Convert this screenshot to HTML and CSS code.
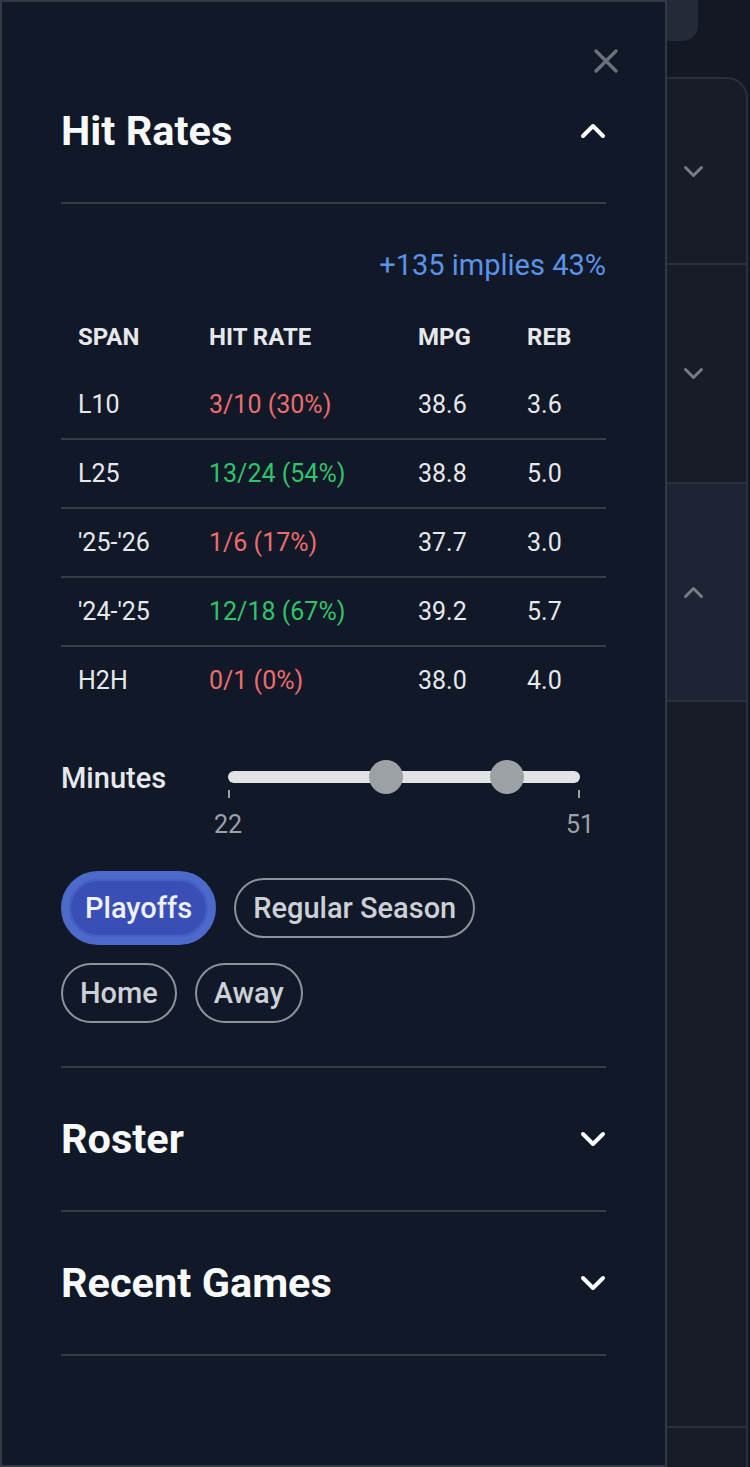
FILE: index.html
```html
<!DOCTYPE html>
<html lang="en">
<head>
<meta charset="utf-8">
<title>Hit Rates</title>
<link rel="stylesheet" href="styles.css">
</head>
<body>
<div class="backdrop">
  <div class="topbar"></div>
  <div class="card">
    <div class="brow r1"><svg class="bchev" width="21" height="13" viewBox="0 0 21 13"><path d="M2.5 2.5 L10.5 10.5 L18.5 2.5"/></svg></div>
    <div class="brow r2"><svg class="bchev" width="21" height="13" viewBox="0 0 21 13"><path d="M2.5 2.5 L10.5 10.5 L18.5 2.5"/></svg></div>
    <div class="brow r3"><svg class="bchev" width="21" height="13" viewBox="0 0 21 13"><path d="M2.5 10.5 L10.5 2.5 L18.5 10.5"/></svg></div>
    <div class="brow r4"></div>
    <div class="brow r5"></div>
  </div>
</div>

<aside class="drawer">
  <button class="close" aria-label="Close">
    <svg width="26" height="26" viewBox="0 0 26 26"><path d="M3 3 L23 23 M23 3 L3 23"/></svg>
  </button>

  <section class="sec">
    <div class="sec-head open">
      <h2>Hit Rates</h2>
      <svg class="chev" width="26" height="16" viewBox="0 0 26 16"><path d="M3 13 L13 3 L23 13"/></svg>
    </div>
    <div class="sec-body">
      <p class="implied">+135 implies 43%</p>
      <div class="rates">
        <div class="trow head"><span>SPAN</span><span>HIT RATE</span><span>MPG</span><span>REB</span></div>
        <div class="trow"><span>L10</span><span class="miss">3/10 (30%)</span><span>38.6</span><span>3.6</span></div>
        <div class="trow"><span>L25</span><span class="hit">13/24 (54%)</span><span>38.8</span><span>5.0</span></div>
        <div class="trow"><span>'25-'26</span><span class="miss">1/6 (17%)</span><span>37.7</span><span>3.0</span></div>
        <div class="trow"><span>'24-'25</span><span class="hit">12/18 (67%)</span><span>39.2</span><span>5.7</span></div>
        <div class="trow last"><span>H2H</span><span class="miss">0/1 (0%)</span><span>38.0</span><span>4.0</span></div>
      </div>

      <div class="minutes">
        <span class="min-label">Minutes</span>
        <div class="slider">
          <div class="track">
            <span class="thumb" style="left:44.8%"></span>
            <span class="thumb" style="left:79.3%"></span>
          </div>
          <div class="ticks"><i></i><i></i></div>
          <div class="tick-labels"><span>22</span><span>51</span></div>
        </div>
      </div>

      <div class="chips">
        <div class="chip-row">
          <button class="chip active">Playoffs</button>
          <button class="chip">Regular Season</button>
        </div>
        <div class="chip-row">
          <button class="chip">Home</button>
          <button class="chip">Away</button>
        </div>
      </div>
    </div>
  </section>

  <section class="sec">
    <div class="sec-head">
      <h2>Roster</h2>
      <svg class="chev" width="26" height="16" viewBox="0 0 26 16"><path d="M3 3 L13 13 L23 3"/></svg>
    </div>
  </section>

  <section class="sec">
    <div class="sec-head">
      <h2>Recent Games</h2>
      <svg class="chev" width="26" height="16" viewBox="0 0 26 16"><path d="M3 3 L13 13 L23 3"/></svg>
    </div>
  </section>
</aside>
</body>
</html>
```

FILE: styles.css
```css
html, body {
  margin: 0;
  padding: 0;
  height: 1467px;
  overflow: hidden;
  background: #141824;
  font-family: Roboto, "Noto Sans", "Liberation Sans", sans-serif;
}

/* background page under the drawer */
.backdrop {
  width: 750px;
}
.topbar {
  width: 698px;
  height: 41px;
  background: #252a38;
  border-radius: 0 0 15px 0;
}
.card {
  margin-top: 36px;
  width: 746px;
  background: #181c29;
  border-top: 2px solid #2a2f3b;
  border-right: 2px solid #2a2f3b;
  border-radius: 0 21px 0 0;
}
.brow {
  display: flex;
  align-items: center;
  justify-content: flex-end;
  padding-right: 42px;
  border-bottom: 2px solid #2a2f3b;
}
.r1 { height: 184px; }
.r2 { height: 217px; }
.r3 { height: 216px; background: #1f2434; }
.r4 { height: 724px; }
.r5 { height: 100px; border-bottom: 0; }
.bchev path {
  fill: none;
  stroke: #777c88;
  stroke-width: 3;
  stroke-linecap: round;
  stroke-linejoin: round;
}

/* drawer */
.drawer {
  position: fixed;
  left: 0;
  top: 0;
  width: 667px;
  height: 1467px;
  box-sizing: border-box;
  border: 2px solid #333946;
  background: #111827;
  padding: 58px 59px 0;
}
.close {
  position: absolute;
  top: 46px;
  right: 46px;
  width: 26px;
  height: 26px;
  padding: 0;
  border: 0;
  background: none;
  display: block;
}
.close svg { display: block; }
.close path {
  fill: none;
  stroke: #6b7079;
  stroke-width: 3.5;
  stroke-linecap: round;
}

.sec {
  border-bottom: 2px solid #363c4a;
}
.sec-head {
  height: 142px;
  display: flex;
  align-items: center;
  justify-content: space-between;
}
.sec-head.open {
  border-bottom: 2px solid #363c4a;
}
.sec-head h2 {
  margin: 0;
  font-size: 41.5px;
  line-height: 50px;
  font-weight: 700;
  color: #f8f9fb;
}
.chev { display: block; }
.chev path {
  fill: none;
  stroke: #ffffff;
  stroke-width: 4;
  stroke-linecap: round;
  stroke-linejoin: round;
}

.sec-body {
  padding-bottom: 43px;
}
.implied {
  margin: 41px 0 0;
  text-align: right;
  font-size: 29px;
  line-height: 40px;
  color: #5b93e8;
}

.rates {
  margin-top: 18px;
}
.trow {
  display: grid;
  grid-template-columns: 131px 209px 109px 1fr;
  align-items: center;
  height: 67px;
  border-bottom: 2px solid #363c4a;
  font-size: 25px;
  color: #e6e8ec;
}
.trow span { padding-left: 17px; }
.trow.head {
  height: 68px;
  border-bottom: 0;
  font-size: 24px;
  font-weight: 700;
}
.trow.last { border-bottom: 0; }
.miss { color: #ec6d6d; }
.hit { color: #2fc46a; }

.minutes {
  margin-top: 44px;
  display: flex;
  align-items: flex-start;
}
.min-label {
  flex: 0 0 167px;
  font-size: 29px;
  line-height: 40px;
  font-weight: 500;
  color: #e6e8ec;
}
.slider {
  flex: 1;
  margin-right: 26px;
}
.track {
  position: relative;
  margin-top: 13px;
  height: 12px;
  border-radius: 6px;
  background: #e1e3e7;
}
.thumb {
  position: absolute;
  top: 50%;
  width: 34px;
  height: 34px;
  margin: -17px 0 0 -17px;
  border-radius: 50%;
  background: #9ca1a6;
}
.ticks {
  display: flex;
  justify-content: space-between;
  margin-top: 7px;
  height: 8px;
}
.ticks i {
  display: block;
  width: 2px;
  height: 8px;
  background: #9ca1a8;
}
.tick-labels {
  display: flex;
  justify-content: space-between;
  margin: 12px -20px 0;
}
.tick-labels span {
  width: 40px;
  text-align: center;
  font-size: 25px;
  line-height: 30px;
  color: #9ca1a8;
}

.chips {
  margin-top: 31px;
  display: flex;
  flex-direction: column;
  gap: 18px;
}
.chip-row {
  display: flex;
  align-items: center;
  gap: 18px;
}
.chip {
  font-family: Roboto, "Noto Sans", "Liberation Sans", sans-serif;
  font-size: 29px;
  line-height: 40px;
  font-weight: 500;
  color: #cdd0d6;
  background: transparent;
  border: 2px solid #8d929b;
  border-radius: 999px;
  padding: 8px 17px;
  margin: 0;
}
.chip.active {
  border: 8px solid #4d69c9;
  padding: 9px 16px;
  background: #3a4fb5;
  box-shadow: inset 0 0 0 2px #4561c5;
  color: #eef0fa;
}
```
